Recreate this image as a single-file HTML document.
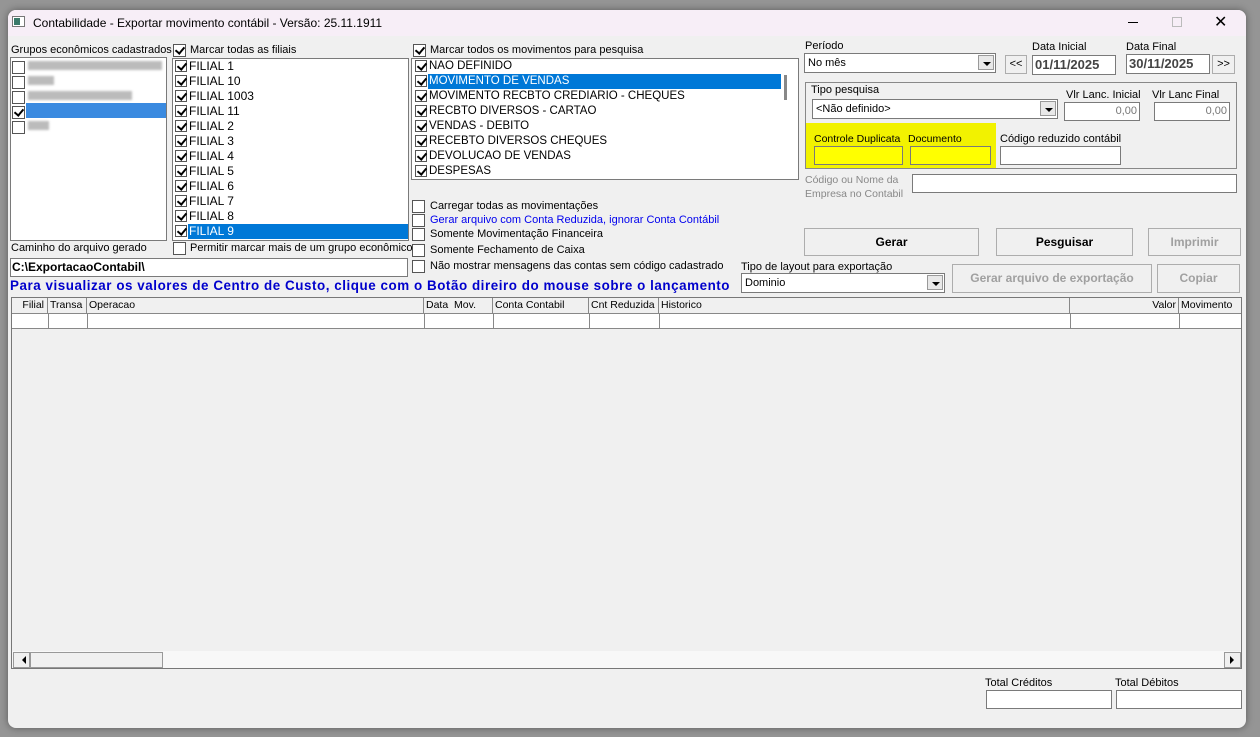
<!DOCTYPE html>
<html><head><meta charset="utf-8"><style>
*{box-sizing:border-box;margin:0;padding:0}
body{width:1260px;height:737px;background:#959595;position:relative;overflow:hidden;font-family:"Liberation Sans",sans-serif;font-size:11px;color:#000}
.a{position:absolute;white-space:nowrap}
#win{position:absolute;left:8px;top:10px;width:1238px;height:718px;background:#f0f0f0;border-radius:8px;overflow:hidden;box-shadow:0 0 8px rgba(0,0,0,.4)}
#tb{position:absolute;left:0;top:0;width:100%;height:26px;background:#f7eef7}
.box{position:absolute;background:#fff;border:1px solid #7a7a7a}
.cb{position:absolute;width:13px;height:13px;background:#fff;border:1px solid #555}
.cb.k::after{content:"";position:absolute;left:3px;top:0px;width:4px;height:7px;border:solid #000;border-width:0 2px 2px 0;transform:rotate(40deg)}
.sel{background:#0078d7;color:#fff}
.btn{position:absolute;background:#f0f0f0;border:1px solid #adadad;text-align:center;font-weight:bold;font-size:12px}
.dis{color:#a0a0a0}
.dd{position:absolute;right:1px;top:1px;width:16px;height:15px;background:#e8e8e8;border:1px solid #999}
.dd::after{content:"";position:absolute;left:4px;top:6px;border:4px solid transparent;border-top:4px solid #000}
.row{position:absolute;height:15px;line-height:15px}
.hdr{position:absolute;top:0;height:15px;border-right:1px solid #888;font-size:10.5px;line-height:15px;padding-left:2px}
.lst .cb{width:12px;height:12px}
</style></head><body>
<div id="win">
<div id="tb">
 <div class="a" style="left:4px;top:6px;width:13px;height:11px;background:#fff;border:1px solid #777"><div style="position:absolute;left:1px;top:1px;width:6px;height:7px;background:#3a7a6a"></div></div>
 <div class="a" style="left:25px;top:6px;font-size:12px">Contabilidade - Exportar movimento contábil - Versão: 25.11.1911</div>
 <div class="a" style="left:1120px;top:12px;width:10px;height:1px;background:#000"></div>
 <div class="a" style="left:1164px;top:7px;width:10px;height:10px;border:1px solid #bbb"></div>
 <div class="a" style="left:1206px;top:2px;font-size:16px">✕</div>
</div>
</div>
<div class="a" style="left:11px;top:44px">Grupos econômicos cadastrados</div>
<div class="box" style="left:10px;top:57px;width:157px;height:184px"></div>
<div class="cb" style="left:12px;top:61px"></div><div class="a" style="left:28px;top:61px;width:134px;height:9px;background:#bbb;filter:blur(1px)"></div>
<div class="cb" style="left:12px;top:76px"></div><div class="a" style="left:28px;top:76px;width:26px;height:9px;background:#bbb;filter:blur(1px)"></div>
<div class="cb" style="left:12px;top:91px"></div><div class="a" style="left:28px;top:91px;width:104px;height:9px;background:#bbb;filter:blur(1px)"></div>
<div class="cb k" style="left:12px;top:106px"></div><div class="a" style="left:26px;top:103px;width:140px;height:15px;background:#3a8ae0"></div>
<div class="cb" style="left:12px;top:121px"></div><div class="a" style="left:28px;top:121px;width:21px;height:9px;background:#bbb;filter:blur(1px)"></div>

<div class="cb k" style="left:173px;top:44px"></div><div class="a" style="left:190px;top:44px">Marcar todas as filiais</div>
<div class="box" style="left:172px;top:58px;width:237px;height:183px"></div>
<div class="a lst" style="left:173px;top:59px;font-size:12px;line-height:15px">
<div class="row" style="top:0"><span class="cb k" style="position:absolute;left:2px;top:1px"></span><span style="position:absolute;left:16px">FILIAL 1</span></div>
<div class="row" style="top:15px"><span class="cb k" style="position:absolute;left:2px;top:1px"></span><span style="position:absolute;left:16px">FILIAL 10</span></div>
<div class="row" style="top:30px"><span class="cb k" style="position:absolute;left:2px;top:1px"></span><span style="position:absolute;left:16px">FILIAL 1003</span></div>
<div class="row" style="top:45px"><span class="cb k" style="position:absolute;left:2px;top:1px"></span><span style="position:absolute;left:16px">FILIAL 11</span></div>
<div class="row" style="top:60px"><span class="cb k" style="position:absolute;left:2px;top:1px"></span><span style="position:absolute;left:16px">FILIAL 2</span></div>
<div class="row" style="top:75px"><span class="cb k" style="position:absolute;left:2px;top:1px"></span><span style="position:absolute;left:16px">FILIAL 3</span></div>
<div class="row" style="top:90px"><span class="cb k" style="position:absolute;left:2px;top:1px"></span><span style="position:absolute;left:16px">FILIAL 4</span></div>
<div class="row" style="top:105px"><span class="cb k" style="position:absolute;left:2px;top:1px"></span><span style="position:absolute;left:16px">FILIAL 5</span></div>
<div class="row" style="top:120px"><span class="cb k" style="position:absolute;left:2px;top:1px"></span><span style="position:absolute;left:16px">FILIAL 6</span></div>
<div class="row" style="top:135px"><span class="cb k" style="position:absolute;left:2px;top:1px"></span><span style="position:absolute;left:16px">FILIAL 7</span></div>
<div class="row" style="top:150px"><span class="cb k" style="position:absolute;left:2px;top:1px"></span><span style="position:absolute;left:16px">FILIAL 8</span></div>
<div class="row" style="top:165px"><span class="cb k" style="position:absolute;left:2px;top:1px"></span><span class="sel" style="position:absolute;left:15px;width:220px;padding-left:1px">FILIAL 9</span></div>
</div>

<div class="cb k" style="left:413px;top:44px"></div><div class="a" style="left:430px;top:44px">Marcar todos os movimentos para pesquisa</div>
<div class="box" style="left:411px;top:58px;width:388px;height:122px"></div>
<div class="a" style="left:784px;top:75px;width:3px;height:25px;background:#888"></div>
<div class="a lst" style="left:413px;top:59px;font-size:11.5px;line-height:15px">
<div class="row" style="top:0"><span class="cb k" style="position:absolute;left:2px;top:1px"></span><span style="position:absolute;left:16px">NAO DEFINIDO</span></div>
<div class="row" style="top:15px"><span class="cb k" style="position:absolute;left:2px;top:1px"></span><span class="sel" style="position:absolute;left:15px;width:353px;padding-left:1px">MOVIMENTO DE VENDAS</span></div>
<div class="row" style="top:30px"><span class="cb k" style="position:absolute;left:2px;top:1px"></span><span style="position:absolute;left:16px">MOVIMENTO RECBTO CREDIARIO - CHEQUES</span></div>
<div class="row" style="top:45px"><span class="cb k" style="position:absolute;left:2px;top:1px"></span><span style="position:absolute;left:16px">RECBTO DIVERSOS - CARTAO</span></div>
<div class="row" style="top:60px"><span class="cb k" style="position:absolute;left:2px;top:1px"></span><span style="position:absolute;left:16px">VENDAS - DEBITO</span></div>
<div class="row" style="top:75px"><span class="cb k" style="position:absolute;left:2px;top:1px"></span><span style="position:absolute;left:16px">RECEBTO DIVERSOS CHEQUES</span></div>
<div class="row" style="top:90px"><span class="cb k" style="position:absolute;left:2px;top:1px"></span><span style="position:absolute;left:16px">DEVOLUCAO DE VENDAS</span></div>
<div class="row" style="top:105px"><span class="cb k" style="position:absolute;left:2px;top:1px"></span><span style="position:absolute;left:16px">DESPESAS</span></div>
</div>

<div class="cb" style="left:412px;top:200px"></div><div class="a" style="left:430px;top:200px">Carregar todas as movimentações</div>
<div class="cb" style="left:412px;top:214px"></div><div class="a" style="left:430px;top:214px;color:#0000ee">Gerar arquivo com Conta Reduzida, ignorar Conta Contábil</div>
<div class="cb" style="left:412px;top:228px"></div><div class="a" style="left:430px;top:228px">Somente Movimentação Financeira</div>
<div class="cb" style="left:412px;top:244px"></div><div class="a" style="left:430px;top:244px">Somente Fechamento de Caixa</div>
<div class="cb" style="left:412px;top:260px"></div><div class="a" style="left:430px;top:260px">Não mostrar mensagens das contas sem código cadastrado</div>

<div class="a" style="left:11px;top:242px">Caminho do arquivo gerado</div>
<div class="cb" style="left:173px;top:242px"></div><div class="a" style="left:190px;top:242px">Permitir marcar mais de um grupo econômico</div>
<div class="box" style="left:10px;top:258px;width:398px;height:19px"></div>
<div class="a" style="left:12px;top:260px;font-weight:bold;font-size:12px">C:\ExportacaoContabil\</div>
<div class="a" style="left:10px;top:278px;font-weight:bold;font-size:13.4px;color:#0000cc;letter-spacing:0.55px">Para visualizar os valores de Centro de Custo, clique com o Botão direiro do mouse sobre o lançamento</div>

<div class="a" style="left:741px;top:261px">Tipo de layout para exportação</div>
<div class="box" style="left:741px;top:273px;width:204px;height:20px"><span class="a" style="left:3px;top:3px">Dominio</span><div class="dd"></div></div>
<div class="btn dis" style="left:952px;top:264px;width:200px;height:29px;line-height:27px">Gerar arquivo de exportação</div>
<div class="btn dis" style="left:1157px;top:264px;width:83px;height:29px;line-height:27px">Copiar</div>

<div class="a" style="left:805px;top:40px">Período</div>
<div class="box" style="left:804px;top:53px;width:192px;height:20px"><span class="a" style="left:3px;top:3px">No mês</span><div class="dd"></div></div>
<div class="btn" style="left:1005px;top:55px;width:22px;height:19px;font-weight:normal;font-size:11px;line-height:17px">&lt;&lt;</div>
<div class="a" style="left:1032px;top:41px">Data Inicial</div>
<div class="box" style="left:1032px;top:55px;width:84px;height:20px"><span class="a" style="left:2px;top:1px;font-weight:bold;font-size:13px;color:#444">01/11/2025</span></div>
<div class="a" style="left:1126px;top:41px">Data Final</div>
<div class="box" style="left:1126px;top:54px;width:84px;height:20px"><span class="a" style="left:2px;top:1px;font-weight:bold;font-size:13px;color:#444">30/11/2025</span></div>
<div class="btn" style="left:1212px;top:55px;width:23px;height:19px;font-weight:normal;font-size:11px;line-height:17px">&gt;&gt;</div>

<div class="a" style="left:805px;top:82px;width:432px;height:87px;border:1px solid #888"></div>
<div class="a" style="left:806px;top:123px;width:190px;height:45px;background:#f2f200"></div>
<div class="a" style="left:811px;top:84px">Tipo pesquisa</div>
<div class="box" style="left:812px;top:99px;width:246px;height:20px"><span class="a" style="left:3px;top:3px">&lt;Não definido&gt;</span><div class="dd"></div></div>
<div class="a" style="left:1066px;top:89px">Vlr Lanc. Inicial</div>
<div class="box" style="left:1064px;top:102px;width:76px;height:19px"><span class="a" style="right:2px;top:2px;color:#777">0,00</span></div>
<div class="a" style="left:1152px;top:89px">Vlr Lanc Final</div>
<div class="box" style="left:1154px;top:102px;width:76px;height:19px"><span class="a" style="right:2px;top:2px;color:#777">0,00</span></div>
<div class="a" style="left:814px;top:133px;font-size:10.5px">Controle Duplicata</div>
<div class="a" style="left:908px;top:133px;font-size:10.5px">Documento</div>
<div class="box" style="left:814px;top:146px;width:89px;height:19px;background:#ffff00"></div>
<div class="box" style="left:910px;top:146px;width:81px;height:19px;background:#ffff00"></div>
<div class="a" style="left:1000px;top:133px">Código reduzido contábil</div>
<div class="box" style="left:1000px;top:146px;width:121px;height:19px"></div>
<div class="a" style="left:805px;top:173px;color:#888;line-height:14px;font-size:10.5px">Código ou Nome da<br>Empresa no Contabil</div>
<div class="box" style="left:912px;top:174px;width:325px;height:19px"></div>

<div class="btn" style="left:804px;top:228px;width:175px;height:28px;line-height:26px">Gerar</div>
<div class="btn" style="left:996px;top:228px;width:137px;height:28px;line-height:26px">Pesguisar</div>
<div class="btn dis" style="left:1148px;top:228px;width:93px;height:28px;line-height:26px">Imprimir</div>

<div class="a" style="left:11px;top:297px;width:1231px;height:372px;border:1px solid #777;background:#f0f0f0">
 <div class="a" style="left:0;top:0;width:100%;height:16px;border-bottom:1px solid #888;background:#f0f0f0"></div>
 <div class="a" style="left:0;top:16px;width:100%;height:15px;background:#fff;border-bottom:1px solid #888"></div>
 <div class="hdr" style="left:0;width:36px;text-align:right;padding-right:3px">Filial</div>
 <div class="hdr" style="left:36px;width:39px">Transa</div>
 <div class="hdr" style="left:75px;width:337px">Operacao</div>
 <div class="hdr" style="left:412px;width:69px">Data&nbsp; Mov.</div>
 <div class="hdr" style="left:481px;width:96px">Conta Contabil</div>
 <div class="hdr" style="left:577px;width:70px">Cnt Reduzida</div>
 <div class="hdr" style="left:647px;width:411px">Historico</div>
 <div class="hdr" style="left:1058px;width:109px;text-align:right;padding-right:2px">Valor</div>
 <div class="hdr" style="left:1167px;width:64px;border-right:none">Movimento</div>
 <div class="a" style="left:36px;top:16px;width:1px;height:15px;background:#888"></div>
 <div class="a" style="left:75px;top:16px;width:1px;height:15px;background:#888"></div>
 <div class="a" style="left:412px;top:16px;width:1px;height:15px;background:#888"></div>
 <div class="a" style="left:481px;top:16px;width:1px;height:15px;background:#888"></div>
 <div class="a" style="left:577px;top:16px;width:1px;height:15px;background:#888"></div>
 <div class="a" style="left:647px;top:16px;width:1px;height:15px;background:#888"></div>
 <div class="a" style="left:1058px;top:16px;width:1px;height:15px;background:#888"></div>
 <div class="a" style="left:1167px;top:16px;width:1px;height:15px;background:#888"></div>
 <div class="a" style="left:0;top:353px;width:1229px;height:17px;background:#f8f8f8"></div>
 <div class="a" style="left:1px;top:354px;width:17px;height:16px;border:1px solid #999;background:#f0f0f0"><div class="a" style="left:4px;top:3px;border:4px solid transparent;border-right:4px solid #000"></div></div>
 <div class="a" style="left:18px;top:354px;width:133px;height:16px;border:1px solid #999;background:#f0f0f0"></div>
 <div class="a" style="left:1212px;top:354px;width:17px;height:16px;border:1px solid #999;background:#f0f0f0"><div class="a" style="left:5px;top:3px;border:4px solid transparent;border-left:4px solid #000"></div></div>
</div>

<div class="a" style="left:985px;top:677px">Total Créditos</div>
<div class="a" style="left:1115px;top:677px">Total Débitos</div>
<div class="box" style="left:986px;top:690px;width:126px;height:19px"></div>
<div class="box" style="left:1116px;top:690px;width:126px;height:19px"></div>
</body></html>
